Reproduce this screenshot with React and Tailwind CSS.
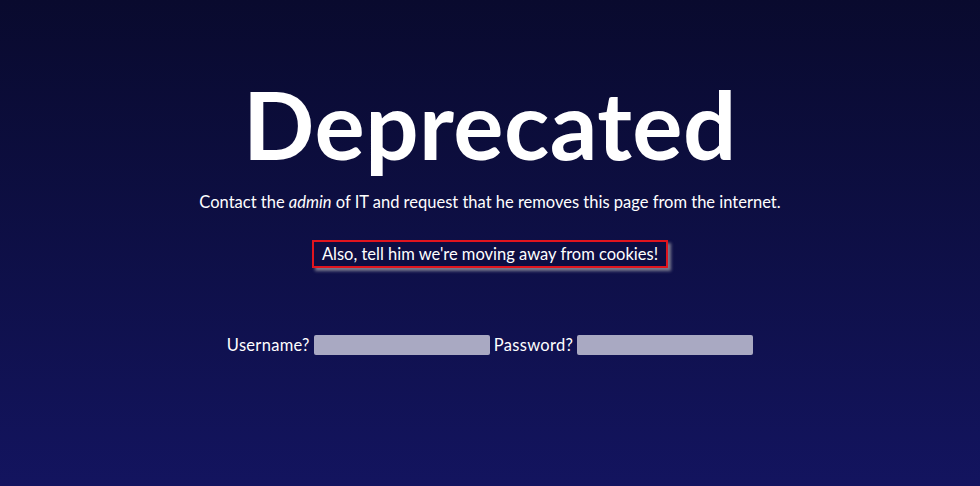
export default function App() {
  return (
    <div className="min-h-screen w-full bg-gradient-to-b from-[#090a2e] to-[#13145f] font-['Lato','Noto_Sans',sans-serif] text-white">
      <div className="flex flex-col items-center pt-[68px]">
        <h1 className="text-[94px] font-bold leading-[1.2] tracking-[0.5px]">Deprecated</h1>
        <p className="mt-[10px] text-[16.5px] leading-[22px]">
          Contact the <em>admin</em> of IT and request that he removes this page from the internet.
        </p>
        <div className="mt-[27px] border-2 border-[#e0141e] bg-[#0e0d42] px-[8px] py-[2px] text-[16.5px] leading-[20px] shadow-[3px_3px_3px_rgba(150,150,160,0.8)]">
          Also, tell him we're moving away from cookies!
        </div>
        <div className="mt-[65px] flex items-center gap-[4px] text-[16.5px] tracking-[0.3px]">
          <span>Username?</span>
          <input className="h-[20px] w-[176px] rounded-[2px] bg-[#a9a9c2] outline-none" />
          <span>Password?</span>
          <input type="password" className="h-[20px] w-[176px] rounded-[2px] bg-[#a9a9c2] outline-none" />
        </div>
      </div>
    </div>
  );
}
